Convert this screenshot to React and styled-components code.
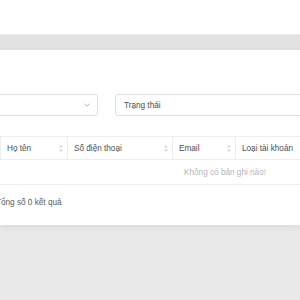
import styled, { createGlobalStyle } from "styled-components";

const GlobalStyle = createGlobalStyle`
  html, body {
    margin: 0;
    padding: 0;
    background: #e9e9e9;
    overflow: hidden;
  }
  body {
    font-family: "Liberation Sans", Arial, sans-serif;
  }
`;

const Page = styled.div`
  width: 300px;
  height: 300px;
  overflow: hidden;
  display: flex;
  flex-direction: column;
`;

const TopBar = styled.div`
  height: 34px;
  background: #ffffff;
`;

const Band = styled.div`
  height: 15px;
  background: #e2e2e2;
  border-top: 1px solid #ebebeb;
`;

const Panel = styled.div`
  background: #ffffff;
  height: 175px;
  padding-top: 44px;
  box-sizing: border-box;
  box-shadow: 0 2px 6px rgba(0, 0, 0, 0.07);
  position: relative;
  z-index: 1;
`;

const Inner = styled.div`
  margin-left: -24px;
  width: 520px;
`;

const Filters = styled.div`
  display: flex;
  gap: 17px;
`;

const Field = styled.div`
  width: ${(p) => p.$w}px;
  height: 22px;
  box-sizing: border-box;
  border: 1px solid #dedfe3;
  border-radius: 3px;
  display: flex;
  align-items: center;
  justify-content: space-between;
  padding: 0 7px 0 8px;
  font-size: 8.2px;
  color: #4a4a4a;
`;

const Chevron = () => (
  <svg width="6" height="4" viewBox="0 0 6 4">
    <path d="M0.5 0.8 L3 3.2 L5.5 0.8" fill="none" stroke="#a8a8a8" strokeWidth="0.9" />
  </svg>
);

const Table = styled.div`
  margin-top: 20px;
  width: 498px;
  font-size: 8.2px;
`;

const HeadRow = styled.div`
  display: flex;
  height: 24px;
  box-sizing: border-box;
  border-top: 1px solid #ebeef3;
  border-bottom: 1px solid #ebeef3;
`;

const HeadCell = styled.div`
  width: ${(p) => p.$w}px;
  box-sizing: border-box;
  border-right: 1px solid #ebeef3;
  display: flex;
  align-items: center;
  justify-content: space-between;
  padding: 0 4px 0 6px;
  color: #4e4e52;
  &:last-child {
    border-right: none;
    flex: 1;
  }
`;

const Sort = () => (
  <svg width="4" height="7" viewBox="0 0 4 7">
    <path d="M2 0 L4 2.6 L0 2.6 Z M2 7 L4 4.4 L0 4.4 Z" fill="#d2d5db" />
  </svg>
);

const EmptyRow = styled.div`
  height: 25px;
  box-sizing: border-box;
  border-bottom: 1px solid #ebeef3;
  display: flex;
  align-items: center;
  justify-content: center;
  color: #b3b5ba;
`;

const Footer = styled.div`
  margin-top: 13px;
  font-size: 8.2px;
  color: #5a5a5e;
  padding-left: 20px;
`;

const columns = [
  { w: 25, label: "" },
  { w: 67, label: "Họ tên", sort: true },
  { w: 105, label: "Số điện thoại", sort: true },
  { w: 63, label: "Email", sort: true },
  { w: 238, label: "Loại tài khoản" },
];

export default function App() {
  return (
    <Page>
      <GlobalStyle />
      <TopBar />
      <Band />
      <Panel>
        <Inner>
          <Filters>
            <Field $w={122}>
              <span />
              <Chevron />
            </Field>
            <Field $w={260}>Trạng thái</Field>
          </Filters>
          <Table>
            <HeadRow>
              {columns.map((c, i) => (
                <HeadCell key={i} $w={c.w}>
                  <span>{c.label}</span>
                  {c.sort && <Sort />}
                </HeadCell>
              ))}
            </HeadRow>
            <EmptyRow>Không có bản ghi nào!</EmptyRow>
          </Table>
          <Footer>Tổng số 0 kết quả</Footer>
        </Inner>
      </Panel>
    </Page>
  );
}
